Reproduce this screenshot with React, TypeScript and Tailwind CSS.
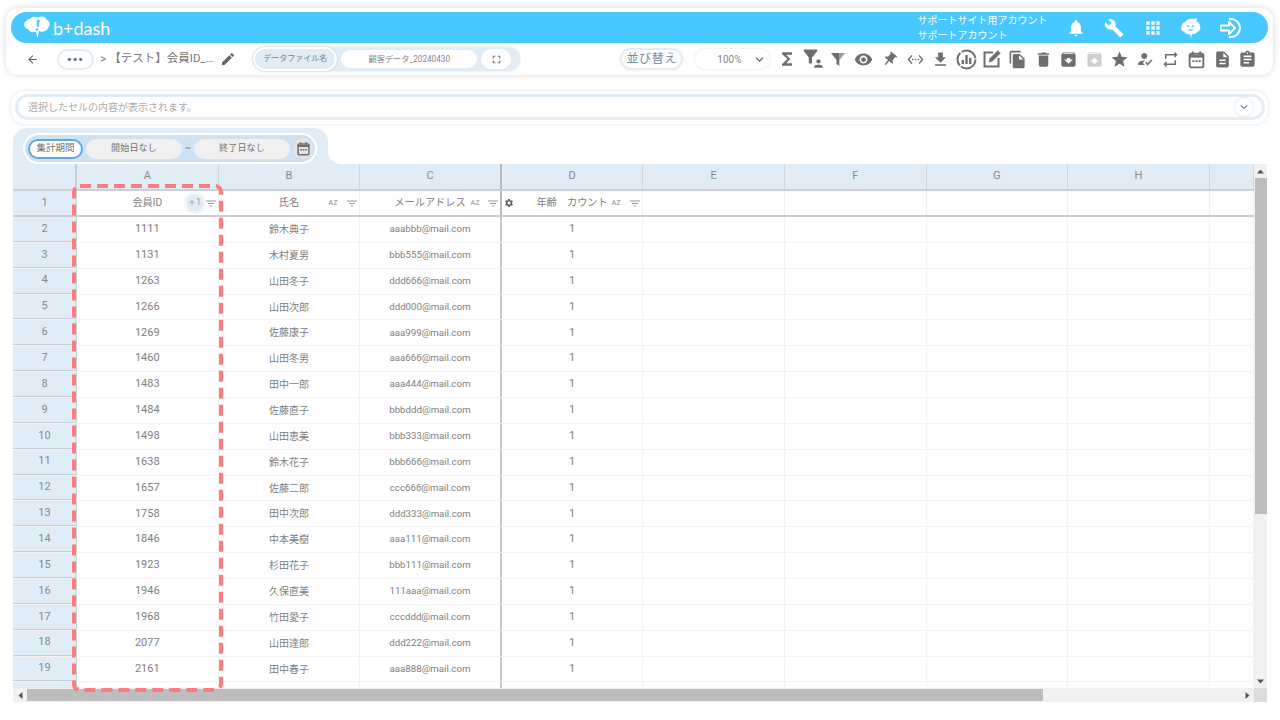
import {
  MdArrowBack, MdEdit, MdNotifications, MdBuild, MdApps, MdFunctions, MdFilterAlt, MdVisibility,
  MdPushPin, MdSettingsEthernet, MdFileDownload, MdFileCopy, MdDelete, MdArchive, MdUnarchive, MdStar,
  MdHowToReg, MdRepeat, MdDescription, MdAssignment, MdExpandMore, MdSettings, MdFullscreen,
  MdPerson, MdArrowUpward,
} from 'react-icons/md'

const rows = [
  ['2', '1111', '鈴木典子', 'aaabbb@mail.com'],
  ['3', '1131', '木村夏男', 'bbb555@mail.com'],
  ['4', '1263', '山田冬子', 'ddd666@mail.com'],
  ['5', '1266', '山田次郎', 'ddd000@mail.com'],
  ['6', '1269', '佐藤康子', 'aaa999@mail.com'],
  ['7', '1460', '山田冬男', 'aaa666@mail.com'],
  ['8', '1483', '田中一郎', 'aaa444@mail.com'],
  ['9', '1484', '佐藤直子', 'bbbddd@mail.com'],
  ['10', '1498', '山田恵美', 'bbb333@mail.com'],
  ['11', '1638', '鈴木花子', 'bbb666@mail.com'],
  ['12', '1657', '佐藤二郎', 'ccc666@mail.com'],
  ['13', '1758', '田中次郎', 'ddd333@mail.com'],
  ['14', '1846', '中本美樹', 'aaa111@mail.com'],
  ['15', '1923', '杉田花子', 'bbb111@mail.com'],
  ['16', '1946', '久保直美', '111aaa@mail.com'],
  ['17', '1968', '竹田愛子', 'cccddd@mail.com'],
  ['18', '2077', '山田達郎', 'ddd222@mail.com'],
  ['19', '2161', '田中春子', 'aaa888@mail.com'],
]

const columns = ['A', 'B', 'C', 'D', 'E', 'F', 'G', 'H', '']

function Logo() {
  return (
    <svg width="28" height="24" viewBox="0 0 28 24">
      <path d="M7 2.500C9 .5 13 0 15 1.500 18-.5 23 1 24 4c3 1 3.500 6 1 8-1 3.500-6 4.500-9 3l-1.500 7-1.500-6.500C10 17 6 16 5 13c-4 0-5.500-7-1-8.500C4.500 3.500 5.500 3 7 2.500z" fill="#fff" />
      <path d="M14 3.500l2.800.4-1.300 7.200h-1.800z" fill="#47c8ff" />
      <circle cx="14" cy="13.500" r="1.300" fill="#47c8ff" />
    </svg>
  )
}

function CloudFace() {
  return (
    <svg width="22" height="22" viewBox="0 0 22 22">
      <path d="M5 5c2-3 6-4 9-3l3-1-.5 3c2 1 3.500 3 3.500 5.500 1 2 0 4-2 5-1.500 2-4 3-6 2.500L11 21l-1-3.500c-3 0-5-1-6-3-2.500 0-3.500-3-2.500-5C2 7 3 5.500 5 5z" fill="#fff" />
      <circle cx="8" cy="9" r="1" fill="#47c8ff" />
      <circle cx="13" cy="9" r="1" fill="#47c8ff" />
      <path d="M8.500 12.500c1 1 3 1 4 0" stroke="#47c8ff" strokeWidth="1.200" fill="none" />
    </svg>
  )
}

function LoginIcon() {
  return (
    <svg width="24" height="24" viewBox="0 0 24 24" fill="none" stroke="#fff" strokeWidth="2">
      <path d="M11 3.200a9 9 0 1 1 0 17.600" />
      <path d="M3 9.500h8V6l6 6-6 6v-3.500H3z" strokeLinejoin="round" />
    </svg>
  )
}

function ChartRing() {
  return (
    <svg width="21" height="21" viewBox="0 0 21 21" fill="none" stroke="#6e6e6e">
      <circle cx="10.500" cy="10.500" r="9" strokeWidth="2" strokeDasharray="20 1.500 14 1.500 18 1.500" />
      <path d="M6.800 15v-4M10.500 15V6M14.200 15v-6" strokeWidth="2.400" />
    </svg>
  )
}

function EditSquare() {
  return (
    <svg width="20" height="20" viewBox="0 0 20 20" fill="none" stroke="#6e6e6e">
      <path d="M11 3.500H2.500v14h14V9" strokeWidth="2" />
      <path d="M7 13l.8-3.400 8-8 2.600 2.600-8 8z" fill="#6e6e6e" strokeWidth="0.500" />
    </svg>
  )
}

function CalendarIcon({ size }: { size: number }) {
  return (
    <svg width={size} height={size} viewBox="0 0 18 18" fill="none" stroke="#6e6e6e">
      <rect x="2.500" y="3.500" width="13" height="13" rx="1.500" strokeWidth="1.800" />
      <path d="M2 6h14" strokeWidth="2.400" />
      <path d="M5.500 1.500v3M12.500 1.500v3" strokeWidth="1.600" />
      <path d="M5 10.500h8" strokeWidth="1.800" strokeDasharray="2 1" />
    </svg>
  )
}

function FilterUser() {
  return (
    <div className="relative h-[20px] w-[20px]">
      <MdFilterAlt className="absolute -left-[3px] -top-[3px] text-[#6e6e6e]" size={21} />
      <MdPerson className="absolute -bottom-[1px] -right-[2px] bg-white text-[#6e6e6e]" size={13} />
    </div>
  )
}

function ColorFilter() {
  return (
    <svg width="16" height="16" viewBox="0 0 16 16">
      <path d="M1 2h14L9.500 9v6L8 13.500V2z" fill="#8ba3b5" />
      <path d="M1 2h8v12.500L6.500 13V9z" fill="#6e6e6e" />
    </svg>
  )
}

function SmallFilter() {
  return (
    <svg width="10" height="7" viewBox="0 0 10 7" stroke="#9a9a9a" strokeWidth="1.100">
      <path d="M0 1h10M2 3.500h6M4 6h2" />
    </svg>
  )
}

function AzMark({ className }: { className: string }) {
  return <span className={`absolute scale-x-90 text-[8px] leading-none text-[#8c8c8c] ${className}`}>AZ</span>
}

function ScrollArrow({ d }: { d: string }) {
  return (
    <svg width="7" height="7" viewBox="0 0 7 7">
      <path d={d} fill="#555" />
    </svg>
  )
}

function HeaderLabel({ name }: { name: string }) {
  return <span className="text-[10.200px] leading-none text-[#808080]">{name}</span>
}

export default function App() {
  return (
    <div className="relative flex h-[720px] w-[1280px] flex-col overflow-hidden bg-white font-['Roboto','Noto_Sans_CJK_JP',sans-serif] text-[#808080]">
      {/* Top card */}
      <div className="ml-[6px] mt-[8px] h-[67px] w-[1267px] rounded-xl bg-white px-[5px] pt-[4px] shadow-[0_0_6px_rgba(0,0,0,0.16)]">
        <div className="flex h-[31px] w-[1257px] items-center rounded-full bg-[#47c8ff] pl-[12px] pr-[19px] text-white">
          <Logo />
          <span className="ml-[2px] font-['Lato',sans-serif] text-[18px] leading-none">b+dash</span>
          <div className="ml-auto flex flex-col pt-[2px] text-[10px] leading-[14.500px]">
            <span>サポートサイト用アカウント</span>
            <span>サポートアカウント</span>
          </div>
          <div className="ml-[9px] flex items-center pt-[1px]">
            <span className="flex w-[38.500px] justify-center"><MdNotifications size={20} /></span>
            <span className="flex w-[38.500px] justify-center"><MdBuild size={20} /></span>
            <span className="flex w-[38.500px] justify-center"><MdApps size={20} /></span>
            <span className="flex w-[38.500px] justify-center"><CloudFace /></span>
            <span className="flex w-[38.500px] justify-center"><LoginIcon /></span>
          </div>
        </div>

        <div className="flex h-[32px] items-center pl-[15px]">
          <MdArrowBack size={13} className="text-[#666]" />
          <div className="ml-[18px] flex h-[21px] w-[37px] items-center justify-center rounded-full border-2 border-[#e1eef8] bg-white text-[13px] font-bold leading-none tracking-[1px] text-[#667]">
            •••
          </div>
          <span className="ml-[6px] text-[12px]">&gt;</span>
          <span className="ml-[3px] w-[105px] whitespace-nowrap text-[11.500px] leading-none text-[#777]">【テスト】会員ID_…</span>
          <MdEdit size={16} className="ml-[6px] text-[#666]" />
          <div className="ml-[17px] flex h-[24px] w-[267px] items-center rounded-full bg-[#e0edf7] pr-[8px] shadow-[0_0_3px_rgba(0,0,0,0.12)]">
            <div className="flex h-[24px] w-[84px] items-center justify-center rounded-full border-2 border-white bg-[#e0edf7] text-[8px] shadow-[0_0_2px_rgba(0,0,0,0.2)]">
              データファイル名
            </div>
            <div className="ml-[4px] flex h-[18px] w-[136px] items-center justify-center rounded-full bg-white text-[8.200px] text-[#888]">
              顧客データ_20240430
            </div>
            <div className="ml-[4px] flex h-[20px] w-[30px] items-center justify-center rounded-full bg-white">
              <MdFullscreen size={13} className="text-[#777]" />
            </div>
          </div>
          <div className="ml-[100px] flex h-[22px] w-[63px] items-center justify-center rounded-full border-2 border-[#e1eef8] bg-white text-[12px] tracking-[0.7px] text-[#6f8d9f] shadow-[0_0_2px_rgba(0,0,0,0.1)]">
            並び替え
          </div>
          <div className="ml-[12px] flex h-[20px] w-[75px] items-center rounded-full bg-white pl-[22px] pr-[3px] text-[10px] text-[#888] shadow-[0_0_3px_rgba(0,0,0,0.14)]">
            100%
            <MdExpandMore size={15} className="ml-auto text-[#667]" />
          </div>
          <div className="ml-[4px] flex items-center text-[#6e6e6e]">
            <span className="flex w-[25.600px] justify-center"><MdFunctions size={20} /></span>
            <span className="flex w-[25.600px] justify-center"><FilterUser /></span>
            <span className="flex w-[25.600px] justify-center"><ColorFilter /></span>
            <span className="flex w-[25.600px] justify-center"><MdVisibility size={19} /></span>
            <span className="flex w-[25.600px] justify-center"><MdPushPin size={17} className="rotate-[40deg]" /></span>
            <span className="flex w-[25.600px] justify-center"><MdSettingsEthernet size={17} /></span>
            <span className="flex w-[25.600px] justify-center"><MdFileDownload size={19} /></span>
            <span className="flex w-[25.600px] justify-center"><ChartRing /></span>
            <span className="flex w-[25.600px] justify-center"><EditSquare /></span>
            <span className="flex w-[25.600px] justify-center"><MdFileCopy size={19} /></span>
            <span className="flex w-[25.600px] justify-center"><MdDelete size={19} /></span>
            <span className="flex w-[25.600px] justify-center"><MdArchive size={19} /></span>
            <span className="flex w-[25.600px] justify-center"><MdUnarchive size={19} className="text-[#cfcfcf]" /></span>
            <span className="flex w-[25.600px] justify-center"><MdStar size={19} /></span>
            <span className="flex w-[25.600px] justify-center"><MdHowToReg size={18} /></span>
            <span className="flex w-[25.600px] justify-center"><MdRepeat size={19} /></span>
            <span className="flex w-[25.600px] justify-center"><CalendarIcon size={19} /></span>
            <span className="flex w-[25.600px] justify-center"><MdDescription size={19} /></span>
            <span className="flex w-[25.600px] justify-center"><MdAssignment size={19} /></span>
          </div>
        </div>
      </div>

      {/* Selected cell content */}
      <div className="ml-[11px] mt-[16px] h-[33px] w-[1257px] rounded-[14px] bg-white p-[3px] pl-[4px] shadow-[0_0_4px_rgba(0,0,0,0.12)]">
        <div className="flex h-[26px] items-center rounded-full border-[3px] border-[#e1eef8] pl-[10px] pr-[9px] text-[10px] text-[#aaa]">
          選択したセルの内容が表示されます。
          <div className="ml-auto flex h-[18px] w-[18px] items-center justify-center rounded-full bg-white shadow-[0_0_3px_rgba(0,0,0,0.16)]">
            <MdExpandMore size={14} className="text-[#5b7d92]" />
          </div>
        </div>
      </div>

      {/* Period tab */}
      <div className="ml-[13px] mt-[4px] flex">
        <div className="h-[36px] w-[315px] rounded-t-[14px] bg-[#e0edf7] pl-[10px] pt-[5px]">
          <div className="flex h-[31px] w-[294px] items-center rounded-full border-[2px] border-white bg-[#cfe2f2] pl-[3px] text-[9px] tracking-[0.2px] text-[#707070]">
            <div className="flex h-[20px] w-[55px] items-center justify-center rounded-full border-2 border-[#5aa9e6] bg-white text-[9.500px] tracking-normal">
              集計期間
            </div>
            <div className="ml-[3px] flex h-[20px] w-[96px] items-center justify-center rounded-full bg-[#f0f0f0]">開始日なし</div>
            <span className="w-[12px] text-center">~</span>
            <div className="flex h-[20px] w-[96px] items-center justify-center rounded-full bg-[#f0f0f0]">終了日なし</div>
            <div className="ml-[3px] flex h-[20px] w-[20px] items-center justify-center rounded-full bg-[#e4e4e4]">
              <CalendarIcon size={15} />
            </div>
          </div>
        </div>
        <div className="h-[13px] w-[16px] self-end bg-[#e0edf7]">
          <div className="h-full w-full rounded-bl-[14px] bg-white" />
        </div>
      </div>

      {/* Sheet */}
      <div className="relative ml-[13px] flex h-[538px] w-[1254px] flex-col">
        <div className="flex h-[524px]">
          <div className="w-[1241px] overflow-hidden">
            <div className="grid h-[27px] grid-cols-[64px_repeat(8,141.600px)_44.200px] border-b-2 border-[#ccd0d4] bg-[#e0edf7] text-[11px] text-[#8a8a8a]">
              <div className="border-r-2 border-[#c8ced3]" />
              {columns.map((c) => (
                <div
                  key={c}
                  className={`flex items-center justify-center ${c === 'C' ? 'border-r-2 border-[#b5bcc2]' : 'border-r border-[#cfd6dc]'}`}
                >
                  {c}
                </div>
              ))}
            </div>

            <div className="grid h-[26px] grid-cols-[64px_repeat(8,141.600px)_44.200px] border-b-2 border-[#cccccc]">
              <div className="flex items-center justify-center border-r border-[#c8d4dd] bg-[#e0edf7] text-[11px] text-[#888]">1</div>
              <div className="relative flex items-center justify-center border-r border-[#f0f0f0]">
                <HeaderLabel name="会員ID" />
                <div className="absolute right-[13px] flex h-[20px] w-[20px] items-center justify-center rounded-full border border-white bg-[#e0edf7] text-[9px] text-[#8a9aa5] shadow-[0_0_2px_rgba(0,0,0,0.2)]">
                  <MdArrowUpward size={8} />1
                </div>
                <span className="absolute right-[2px]"><SmallFilter /></span>
              </div>
              <div className="relative flex items-center justify-center border-r border-[#f0f0f0]">
                <HeaderLabel name="氏名" />
                <AzMark className="right-[21px]" />
                <span className="absolute right-[2px]"><SmallFilter /></span>
              </div>
              <div className="relative flex items-center justify-center border-r-2 border-[#b5bcc2]">
                <HeaderLabel name="メールアドレス" />
                <AzMark className="right-[20px]" />
                <span className="absolute right-[2px]"><SmallFilter /></span>
              </div>
              <div className="relative flex items-center justify-center border-r border-[#f0f0f0]">
                <MdSettings size={10} className="absolute left-[2px] text-[#666]" />
                <HeaderLabel name="年齢　カウント" />
                <AzMark className="right-[21px]" />
                <span className="absolute right-[2px]"><SmallFilter /></span>
              </div>
              {['e', 'f', 'g', 'h', 'i'].map((k) => (
                <div key={k} className="border-r border-[#f0f0f0]" />
              ))}
            </div>

            {[...rows, ['20', '', '', '']].map((r) => (
              <div key={r[0]} className="grid h-[25.860px] grid-cols-[64px_repeat(8,141.600px)_44.200px] border-b border-[#f2f2f2] text-[11px] text-[#808080]">
                <div className="flex items-center justify-center border-b border-r border-[#c8ced3] bg-[#e0edf7] text-[11px] text-[#888]">
                  {r[3] ? r[0] : ''}
                </div>
                <div className="flex items-center justify-center border-r border-[#f2f2f2]">{r[1]}</div>
                <div className="flex items-center justify-center border-r border-[#f2f2f2] text-[10px]">{r[2]}</div>
                <div className="flex items-center justify-center border-r-2 border-[#c5c9cc] text-[9.700px]">{r[3]}</div>
                <div className="flex items-center justify-center border-r border-[#f2f2f2]">{r[3] ? '1' : ''}</div>
                {['e', 'f', 'g', 'h', 'i'].map((k) => (
                  <div key={k} className="border-r border-[#f2f2f2]" />
                ))}
              </div>
            ))}
          </div>

          {/* Vertical scrollbar */}
          <div className="flex w-[13px] flex-col items-center bg-[#f1f1f1]">
            <div className="flex h-[14px] items-center"><ScrollArrow d="M3.500 1.500L7 5.500H0z" /></div>
            <div className="h-[336px] w-[12px] bg-[#bdbdbd]" />
            <div className="mt-auto flex h-[14px] items-center"><ScrollArrow d="M0 1.500h7L3.500 5.500z" /></div>
          </div>
        </div>

        {/* Horizontal scrollbar */}
        <div className="flex h-[14px]">
          <div className="flex w-[1241px] items-center bg-[#f1f1f1]">
            <div className="flex w-[14px] justify-center"><ScrollArrow d="M1.500 3.500L5.500 0v7z" /></div>
            <div className="h-[12px] w-[1016px] bg-[#bdbdbd]" />
            <div className="ml-auto flex w-[14px] justify-center"><ScrollArrow d="M1.500 0l4 3.500-4 3.500z" /></div>
          </div>
          <div className="w-[13px] bg-[#dcdcdc]" />
        </div>

        {/* Column A highlight */}
        <svg className="absolute left-[59px] top-[20px]" width="151" height="508" viewBox="0 0 151 508" fill="none">
          <rect x="2" y="2" width="147" height="504" rx="6" stroke="#ff7b84" strokeWidth="4" strokeDasharray="11 6" />
        </svg>
      </div>
    </div>
  )
}
